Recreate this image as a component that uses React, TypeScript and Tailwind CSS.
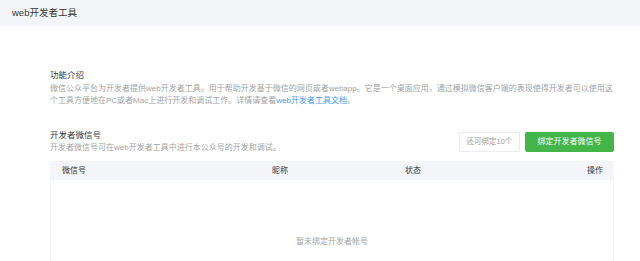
import React from "react";

const font = {
  fontFamily: '"Liberation Sans", "Noto Sans CJK SC", sans-serif',
};

const columns = ["微信号", "昵称", "状态", "操作"];

const App: React.FC = () => {
  return (
    <div className="w-[640px] h-[261px] overflow-hidden bg-white text-[#333]" style={font}>
      <header className="h-[26px] bg-[#f4f5f9] flex items-center pl-3">
        <span className="text-[9.5px] text-[#353535]">web开发者工具</span>
      </header>

      <main className="ml-[50px] w-[564px] pt-[43px]">
        <section>
          <h3 className="text-[8.5px] leading-[12px] text-[#353535]">功能介绍</h3>
          <p className="mt-[2px] text-[8px] leading-[12px] text-[#a3a3a3] whitespace-nowrap">
            <span className="block">
              微信公众平台为开发者提供web开发者工具，用于帮助开发基于微信的网页或者webapp。它是一个桌面应用，通过模拟微信客户端的表现使得开发者可以使用这
            </span>
            <span className="block">
              个工具方便地在PC或者Mac上进行开发和调试工作。详情请查看
              <a href="#" className="text-[#459ae9]">web开发者工具文档</a>。
            </span>
          </p>
        </section>

        <section className="mt-[22px]">
          <div className="flex items-center justify-between">
            <div>
              <h3 className="text-[8.5px] leading-[12px] text-[#353535]">开发者微信号</h3>
              <p className="mt-px text-[8px] leading-[12px] text-[#a3a3a3]">
                开发者微信号可在web开发者工具中进行本公众号的开发和调试。
              </p>
            </div>
            <div className="flex items-center gap-[5px]">
              <div className="h-[20px] w-[61px] border border-[#ececef] flex items-center justify-center text-[7.5px] text-[#9a9a9a]">
                还可绑定10个
              </div>
              <button className="h-[20px] w-[89px] rounded-[2px] bg-[#44b549] text-white text-[8px] flex items-center justify-center">
                绑定开发者微信号
              </button>
            </div>
          </div>

          <div className="mt-[7px]">
            <div className="grid grid-cols-[210px_133px_1fr_auto] h-[19px] items-center bg-[#f4f5f9] text-[8px] text-[#353535]">
              {columns.map((c, i) => (
                <div key={c} className={i === 3 ? "pr-[11px] text-right" : "pl-3"}>
                  {c}
                </div>
              ))}
            </div>
            <div className="h-[120px] border-x border-[#f0f1f4] pt-[56px] text-center text-[8px] leading-[12px] text-[#a3a3a3]">
              暂未绑定开发者帐号
            </div>
          </div>
        </section>
      </main>
    </div>
  );
};

export default App;
